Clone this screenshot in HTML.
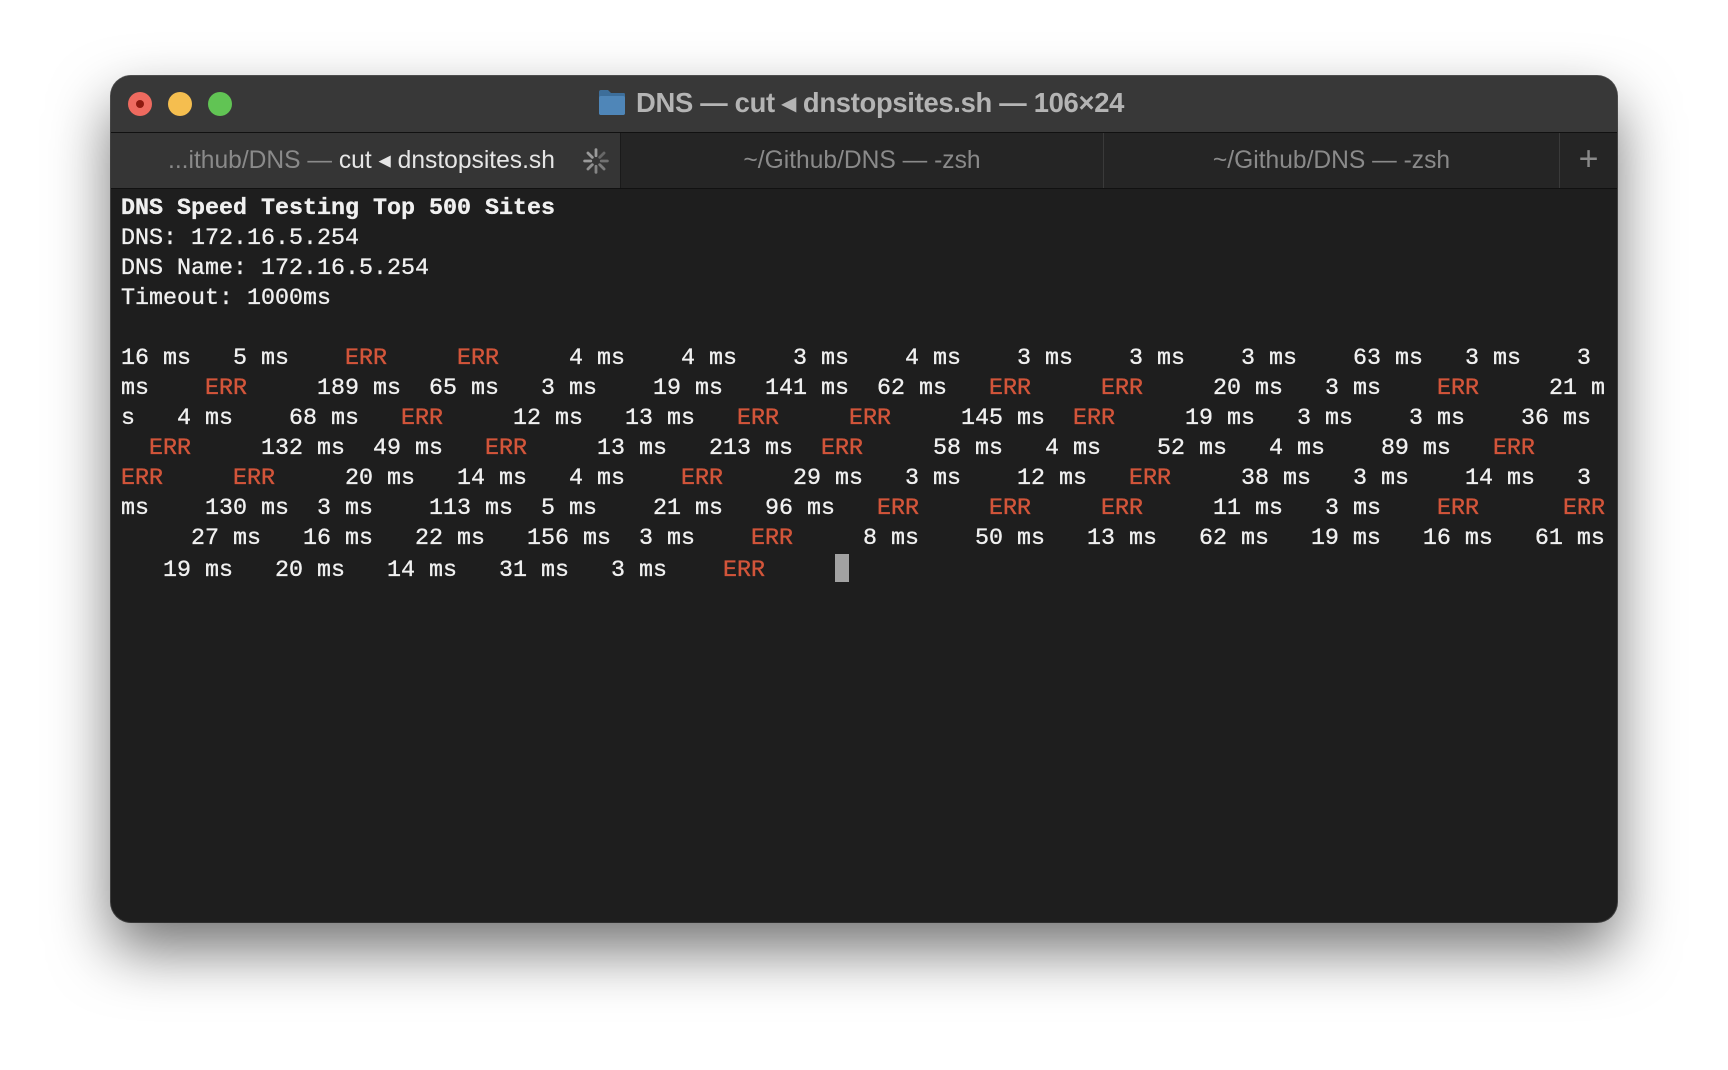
<!DOCTYPE html>
<html><head><meta charset="utf-8"><style>
html,body{margin:0;padding:0;width:1728px;height:1070px;background:#fff;overflow:hidden}
.win{position:absolute;left:111px;top:76px;width:1506px;height:846px;border-radius:20px;background:#1e1e1e;box-shadow:0 28px 60px rgba(0,0,0,.55),0 0 0 1px #555;overflow:hidden}
.title{position:absolute;left:0;top:0;width:100%;height:56px;background:#383838;border-bottom:1px solid #111}
.dot{position:absolute;top:16px;width:24px;height:24px;border-radius:50%}
.ttext{position:absolute;left:525px;top:11px;font:bold 27.4px "Liberation Sans",sans-serif;color:#b4b4b4;white-space:nowrap;letter-spacing:-0.3px}
.tabs{position:absolute;left:0;top:57px;width:100%;height:55px;background:#252525;border-bottom:1px solid #111}
.tab{position:absolute;top:0;height:55px;font:24.6px "Liberation Sans",sans-serif;color:#8a8a8a;line-height:56px;text-align:center;white-space:nowrap}
.term{position:absolute;left:10px;top:118px;font:23.33px/30px "Liberation Mono",monospace;color:#f0f0f0;white-space:pre;margin:0;-webkit-text-stroke:0.35px currentColor}
.e{color:#d2553a}
.cur{display:inline-block;width:14px;height:28px;background:#a2a2a2;vertical-align:-6px}
</style></head><body>
<div class="win">
 <div class="title">
  <div class="dot" style="left:17px;background:#ee6a5f"><div style="position:absolute;left:8px;top:8px;width:8px;height:8px;border-radius:50%;background:#8e1a10"></div></div>
  <div class="dot" style="left:57px;background:#f5be4f"></div>
  <div class="dot" style="left:97px;background:#61c454"></div>
  <svg style="position:absolute;left:487px;top:13px" width="28" height="26" viewBox="0 0 28 26"><path d="M1 3 Q1 1 3 1 H10 L13 4 H26 Q27 4 27 6 V24 Q27 26 25 26 H3 Q1 26 1 24Z" fill="#3d6e9a"/><rect x="1" y="7" width="26" height="19" rx="2" fill="#4f86b8"/></svg>
  <div class="ttext">DNS — cut ◂ dnstopsites.sh — 106×24</div>
 </div>
 <div class="tabs">
  <div class="tab" style="left:0;width:509px;background:#353535;border-right:1px solid #1a1a1a"><span style="position:absolute;left:57px">...ithub/DNS — <span style="color:#e6e6e6">cut ◂ dnstopsites.sh</span></span>
   <svg style="position:absolute;left:471px;top:14px" width="28" height="28" viewBox="-16 -16 32 32" stroke-width="3.2" stroke-linecap="round">
    <g stroke="#9a9a9a"><line x1="0" y1="-6" x2="0" y2="-13"/><line x1="4.2" y1="-4.2" x2="9.2" y2="-9.2" opacity=".5"/><line x1="6" y1="0" x2="13" y2="0" opacity=".6"/><line x1="4.2" y1="4.2" x2="9.2" y2="9.2" opacity=".7"/><line x1="0" y1="6" x2="0" y2="13" opacity=".8"/><line x1="-4.2" y1="4.2" x2="-9.2" y2="9.2" opacity=".9"/><line x1="-6" y1="0" x2="-13" y2="0"/><line x1="-4.2" y1="-4.2" x2="-9.2" y2="-9.2"/></g></svg></div>
  <div class="tab" style="left:510px;width:482px;border-right:1px solid #3a3a3a">~/Github/DNS — -zsh</div>
  <div class="tab" style="left:993px;width:455px;border-right:1px solid #3a3a3a">~/Github/DNS — -zsh</div>
  <div class="tab" style="left:1449px;width:57px;font-size:34px;color:#8a8a8a;line-height:52px">+</div>
 </div>
<pre class="term"><b>DNS Speed Testing Top 500 Sites</b>
DNS: 172.16.5.254
DNS Name: 172.16.5.254
Timeout: 1000ms

16 ms   5 ms    <span class="e">ERR</span>     <span class="e">ERR</span>     4 ms    4 ms    3 ms    4 ms    3 ms    3 ms    3 ms    63 ms   3 ms    3
ms    <span class="e">ERR</span>     189 ms  65 ms   3 ms    19 ms   141 ms  62 ms   <span class="e">ERR</span>     <span class="e">ERR</span>     20 ms   3 ms    <span class="e">ERR</span>     21 m
s   4 ms    68 ms   <span class="e">ERR</span>     12 ms   13 ms   <span class="e">ERR</span>     <span class="e">ERR</span>     145 ms  <span class="e">ERR</span>     19 ms   3 ms    3 ms    36 ms
  <span class="e">ERR</span>     132 ms  49 ms   <span class="e">ERR</span>     13 ms   213 ms  <span class="e">ERR</span>     58 ms   4 ms    52 ms   4 ms    89 ms   <span class="e">ERR</span>
<span class="e">ERR</span>     <span class="e">ERR</span>     20 ms   14 ms   4 ms    <span class="e">ERR</span>     29 ms   3 ms    12 ms   <span class="e">ERR</span>     38 ms   3 ms    14 ms   3
ms    130 ms  3 ms    113 ms  5 ms    21 ms   96 ms   <span class="e">ERR</span>     <span class="e">ERR</span>     <span class="e">ERR</span>     11 ms   3 ms    <span class="e">ERR</span>      <span class="e">ERR</span>
     27 ms   16 ms   22 ms   156 ms  3 ms    <span class="e">ERR</span>     8 ms    50 ms   13 ms   62 ms   19 ms   16 ms   61 ms
   19 ms   20 ms   14 ms   31 ms   3 ms    <span class="e">ERR</span>     <span class="cur"></span></pre>
</div>
</body></html>
